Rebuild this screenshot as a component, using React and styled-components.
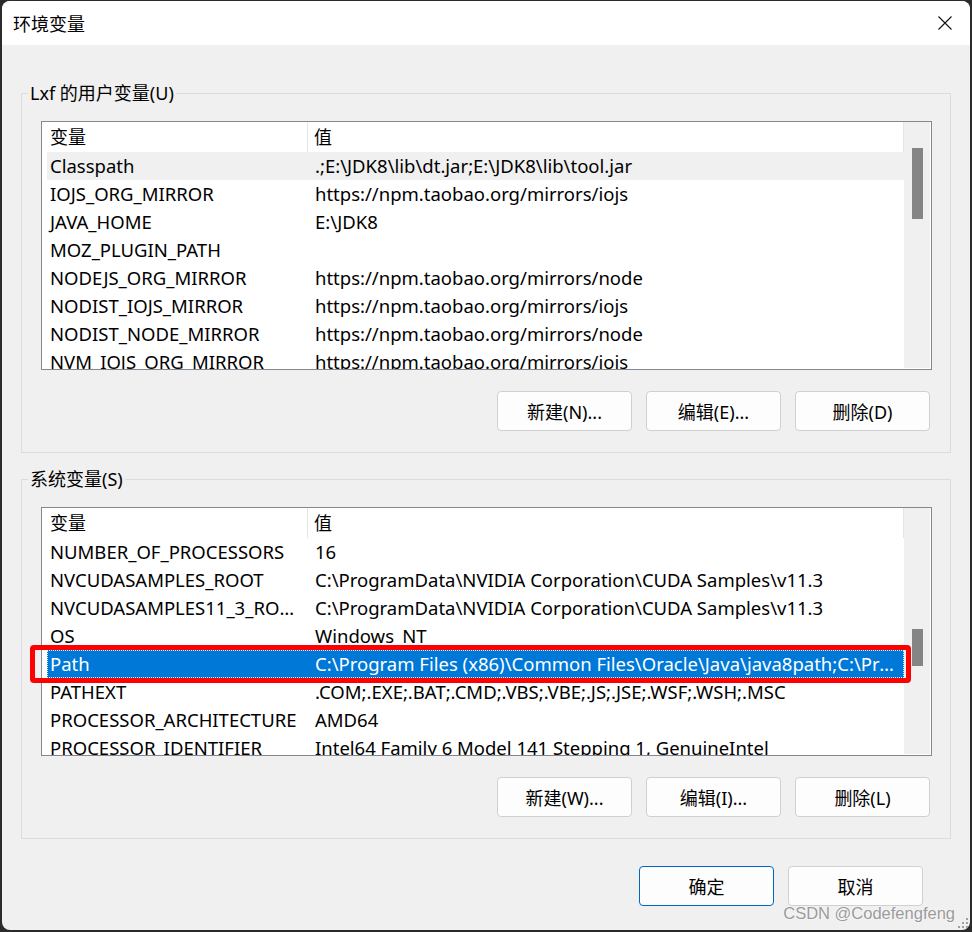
import React from "react"
import styled, { createGlobalStyle } from "styled-components"

const GlobalStyle = createGlobalStyle`
  html, body {
    margin: 0;
    padding: 0;
    background: #2b2b2b;
  }
  body {
    font-family: "Segoe UI", "Noto Sans", "Noto Sans CJK SC", sans-serif;
  }
`

const userVars = [
  ["Classpath", ".;E:\\JDK8\\lib\\dt.jar;E:\\JDK8\\lib\\tool.jar"],
  ["IOJS_ORG_MIRROR", "https://npm.taobao.org/mirrors/iojs"],
  ["JAVA_HOME", "E:\\JDK8"],
  ["MOZ_PLUGIN_PATH", ""],
  ["NODEJS_ORG_MIRROR", "https://npm.taobao.org/mirrors/node"],
  ["NODIST_IOJS_MIRROR", "https://npm.taobao.org/mirrors/iojs"],
  ["NODIST_NODE_MIRROR", "https://npm.taobao.org/mirrors/node"],
  ["NVM_IOJS_ORG_MIRROR", "https://npm.taobao.org/mirrors/iojs"],
]

const systemVars = [
  ["NUMBER_OF_PROCESSORS", "16"],
  ["NVCUDASAMPLES_ROOT", "C:\\ProgramData\\NVIDIA Corporation\\CUDA Samples\\v11.3"],
  ["NVCUDASAMPLES11_3_ROOT", "C:\\ProgramData\\NVIDIA Corporation\\CUDA Samples\\v11.3"],
  ["OS", "Windows_NT"],
  ["Path", "C:\\Program Files (x86)\\Common Files\\Oracle\\Java\\java8path;C:\\Program Files\\Common Files"],
  ["PATHEXT", ".COM;.EXE;.BAT;.CMD;.VBS;.VBE;.JS;.JSE;.WSF;.WSH;.MSC"],
  ["PROCESSOR_ARCHITECTURE", "AMD64"],
  ["PROCESSOR_IDENTIFIER", "Intel64 Family 6 Model 141 Stepping 1, GenuineIntel"],
]

const Window = styled.div`
  position: relative;
  width: 968px;
  height: 929px;
  margin: 1px 0 0 2px;
  background: #f0f0f0;
  border-radius: 8px;
  overflow: hidden;
  display: flex;
  flex-direction: column;
  font-size: 18px;
  color: #000;
`

const TitleBar = styled.div`
  flex: none;
  height: 44px;
  background: #fff;
  display: flex;
  align-items: center;
  justify-content: space-between;
  padding: 0 18px 0 11px;
`

const Title = styled.span`
  font-size: 18px;
  line-height: 22px;
  margin-top: 1px;
`

const CloseIcon = () => (
  <svg width="14" height="14" viewBox="0 0 14 14">
    <path d="M0.5 0.5 L13.5 13.5 M13.5 0.5 L0.5 13.5" stroke="#111" strokeWidth="1.1" fill="none" />
  </svg>
)

const Body = styled.div`
  flex: 1;
  padding: 37px 19px 0 19px;
  display: flex;
  flex-direction: column;
`

const Group = styled.fieldset`
  margin: ${(p) => p.$gap}px 0 0;
  padding: 0 18px 21px 19px;
  border: 1px solid #dcdcdc;
  min-width: 0;
`

const Legend = styled.legend`
  display: block;
  height: 22px;
  line-height: 22px;
  margin-left: -13px;
  padding: 0 2px;
  font-size: 18px;
`

const ListBox = styled.div`
  position: relative;
  box-sizing: border-box;
  width: 891px;
  height: 249px;
  margin-top: 17px;
  border: 1px solid #828790;
  background: #fff;
  display: flex;
`

const ListMain = styled.div`
  flex: 1;
  min-width: 0;
  overflow: hidden;
`

const Header = styled.div`
  display: grid;
  grid-template-columns: 266px 1fr;
  height: 30px;
  border-right: 1px solid #e5e5e5;
`

const HeaderCell = styled.div`
  line-height: 30px;
  padding-left: ${(p) => (p.$first ? 8 : 6)}px;
  border-right: ${(p) => (p.$first ? "1px solid #e5e5e5" : "none")};
  margin: 0 0 1px;
`

const Row = styled.div`
  display: grid;
  grid-template-columns: 261px 1fr;
  height: 28px;
  margin-left: 5px;
  background: ${(p) => (p.$selected ? "#0078d7" : p.$hover ? "#f0f0f0" : "transparent")};
  color: ${(p) => (p.$selected ? "#fff" : "#000")};
  outline: ${(p) => (p.$selected ? "1px dotted rgba(255,255,255,0.85)" : "none")};
  outline-offset: -1px;
`

const Cell = styled.div`
  font-size: 18.5px;
  line-height: 28px;
  white-space: nowrap;
  overflow: hidden;
  text-overflow: ellipsis;
  padding-left: ${(p) => (p.$first ? 3 : 7)}px;
  padding-right: ${(p) => (p.$first ? 8 : 10)}px;
`

const ScrollTrack = styled.div`
  flex: none;
  width: 26px;
  margin: 0 1px 1px 0;
  background: #f0f0f0;
`

const Thumb = styled.div`
  width: 11px;
  margin-left: 8px;
  margin-top: ${(p) => p.$top}px;
  height: ${(p) => p.$height}px;
  background: #858585;
`

const Marker = styled.div`
  position: absolute;
  left: -12px;
  top: ${(p) => p.$top}px;
  width: 881px;
  height: 38px;
  box-sizing: border-box;
  border: 5px solid #fe0000;
  border-radius: 4px;
  pointer-events: none;
`

const ButtonRow = styled.div`
  display: flex;
  justify-content: flex-end;
  gap: 14px;
  margin-top: ${(p) => p.$top || 21}px;
  padding-right: ${(p) => p.$right || 2}px;
`

const Button = styled.button`
  box-sizing: border-box;
  width: 135px;
  height: 40px;
  border: 1px solid ${(p) => (p.$primary ? "#0067c0" : "#d0d0d0")};
  border-radius: 4px;
  background: #fdfdfd;
  font-family: inherit;
  font-size: 18px;
  color: #000;
  padding: 0;
`

const Watermark = styled.div`
  position: absolute;
  right: 15px;
  bottom: 7px;
  font-family: "Liberation Sans", sans-serif;
  font-size: 16.5px;
  color: rgba(130, 130, 130, 0.8);
  text-shadow: 0 0 2px rgba(255, 255, 255, 0.9);
  pointer-events: none;
`

const Grip = styled.svg`
  position: absolute;
  right: 1px;
  bottom: 1px;
`

const ListView = ({ rows, selected, hover, thumbTop, thumbHeight }) => (
  <ListBox>
    <ListMain>
      <Header>
        <HeaderCell $first>变量</HeaderCell>
        <HeaderCell>值</HeaderCell>
      </Header>
      {rows.map(([name, value], i) => (
        <Row key={name} $selected={i === selected} $hover={i === hover}>
          <Cell $first>{name}</Cell>
          <Cell>{value}</Cell>
        </Row>
      ))}
    </ListMain>
    <ScrollTrack>
      <Thumb $top={thumbTop} $height={thumbHeight} />
    </ScrollTrack>
    {selected !== undefined && <Marker $top={30 + selected * 28 - 5} />}
  </ListBox>
)

export default function App() {
  return (
    <>
      <GlobalStyle />
      <Window>
        <TitleBar>
          <Title>环境变量</Title>
          <CloseIcon />
        </TitleBar>
        <Body>
          <Group $gap={0}>
            <Legend>Lxf 的用户变量(U)</Legend>
            <ListView rows={userVars} hover={0} thumbTop={26} thumbHeight={71} />
            <ButtonRow>
              <Button>新建(N)...</Button>
              <Button>编辑(E)...</Button>
              <Button>删除(D)</Button>
            </ButtonRow>
          </Group>
          <Group $gap={15}>
            <Legend>系统变量(S)</Legend>
            <ListView rows={systemVars} selected={4} thumbTop={121} thumbHeight={37} />
            <ButtonRow>
              <Button>新建(W)...</Button>
              <Button>编辑(I)...</Button>
              <Button>删除(L)</Button>
            </ButtonRow>
          </Group>
          <ButtonRow $top={27} $right={28}>
            <Button $primary>确定</Button>
            <Button>取消</Button>
          </ButtonRow>
        </Body>
        <Watermark>CSDN @Codefengfeng</Watermark>
        <Grip width="12" height="12" viewBox="0 0 12 12">
          <g fill="#a0a0a0">
            <rect x="9" y="1" width="2" height="2" />
            <rect x="5" y="5" width="2" height="2" />
            <rect x="9" y="5" width="2" height="2" />
            <rect x="1" y="9" width="2" height="2" />
            <rect x="5" y="9" width="2" height="2" />
            <rect x="9" y="9" width="2" height="2" />
          </g>
        </Grip>
      </Window>
    </>
  )
}
